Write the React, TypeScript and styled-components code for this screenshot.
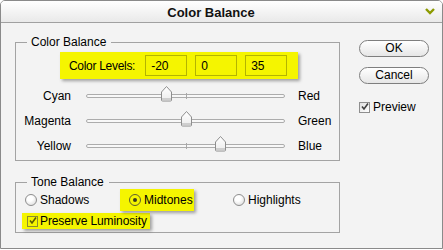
import React from "react";
import styled, { createGlobalStyle, css } from "styled-components";

const sliders = [
  { left: "Cyan", right: "Red", value: -20 },
  { left: "Magenta", right: "Green", value: 0 },
  { left: "Yellow", right: "Blue", value: 35 },
];

const levels = ["-20", "0", "35"];

const Check: React.FC<{ color: string }> = ({ color }) => (
  <svg width="8" height="8" viewBox="0 0 8 8">
    <polyline
      points="1,3.5 3,6 7,0.5"
      fill="none"
      stroke={color}
      strokeWidth="1.6"
    />
  </svg>
);

const SliderThumb: React.FC = () => (
  <svg width="13" height="17" viewBox="0 0 13 17">
    <defs>
      <linearGradient id="thumbFill" x1="0" y1="0" x2="0" y2="1">
        <stop offset="0" stopColor="#ffffff" />
        <stop offset="1" stopColor="#ececec" />
      </linearGradient>
    </defs>
    <path
      d="M1.5 7 L6.5 1.5 L11.5 7 V15 Q11.5 16 10.5 16 H2.5 Q1.5 16 1.5 15 Z"
      fill="url(#thumbFill)"
      stroke="#8e8e8e"
    />
    <rect x="2" y="13" width="9" height="2.5" fill="#cfcfcf" />
  </svg>
);

const App: React.FC = () => {
  return (
    <>
      <GlobalStyle />
      <Window>
        <TitleBar>
          <Title>Color Balance</Title>
          <Chevron width="10" height="7" viewBox="0 0 10 7">
            <polyline
              points="1,1 5,5 9,1"
              fill="none"
              stroke="#8c9a00"
              strokeWidth="2.4"
            />
          </Chevron>
        </TitleBar>

        <Body>
          <LeftColumn>
            <Group>
              <GroupLabel>Color Balance</GroupLabel>
              <LevelsBox>
                <LevelsLabel>Color Levels:</LevelsLabel>
                {levels.map((v, i) => (
                  <LevelInput key={i} value={v} readOnly />
                ))}
              </LevelsBox>
              <Sliders>
                {sliders.map((s) => (
                  <SliderRow key={s.left}>
                    <SliderLabel>{s.left}</SliderLabel>
                    <Track>
                      <Thumb style={{ left: `${(s.value + 100) / 2}%` }}>
                        <SliderThumb />
                      </Thumb>
                    </Track>
                    <SliderLabel $right>{s.right}</SliderLabel>
                  </SliderRow>
                ))}
              </Sliders>
            </Group>

            <Group>
              <GroupLabel>Tone Balance</GroupLabel>
              <ToneRow>
                <RadioOption>
                  <Radio />
                  Shadows
                </RadioOption>
                <RadioOption $highlight>
                  <Radio $checked />
                  Midtones
                </RadioOption>
                <RadioOption>
                  <Radio />
                  Highlights
                </RadioOption>
              </ToneRow>
              <PreserveBox>
                <CheckBox $highlight>
                  <Check color="#5c5c00" />
                </CheckBox>
                Preserve Luminosity
              </PreserveBox>
            </Group>
          </LeftColumn>

          <RightColumn>
            <PillButton>OK</PillButton>
            <PillButton>Cancel</PillButton>
            <PreviewRow>
              <CheckBox>
                <Check color="#404040" />
              </CheckBox>
              Preview
            </PreviewRow>
          </RightColumn>
        </Body>
      </Window>
    </>
  );
};

const GlobalStyle = createGlobalStyle`
  html, body {
    margin: 0;
    padding: 0;
    background: #ffffff;
  }

  body {
    font-family: "Liberation Sans", Arial, sans-serif;
    font-size: 12px;
    color: #000000;
  }
`;

const highlight = css`
  background-color: #f5f500;
  box-shadow: 2px 2px 3px rgba(0, 0, 0, 0.35);
`;

const Window = styled.div`
  width: 443px;
  height: 249px;
  box-sizing: border-box;
  border: 1px solid #8a8a8a;
  border-radius: 5px 5px 0 0;
  background-color: #f3f3f3;
  overflow: hidden;
  display: flex;
  flex-direction: column;
`;

const TitleBar = styled.div`
  height: 21px;
  flex: 0 0 21px;
  border-bottom: 1px solid #a0a0a0;
  background: linear-gradient(#ffffff, #e9e9e9);
  display: flex;
  align-items: center;
`;

const Title = styled.div`
  flex: 1;
  text-align: center;
  font-size: 13px;
  font-weight: bold;
  color: #111111;
  padding-top: 1px;
`;

const Chevron = styled.svg`
  margin: 0 7px 0 4px;
  flex: 0 0 10px;
`;

const Body = styled.div`
  display: flex;
  gap: 19px;
  padding: 12px 0 0 14px;
`;

const LeftColumn = styled.div`
  width: 325px;
  display: flex;
  flex-direction: column;
  gap: 14px;
`;

const Group = styled.fieldset`
  margin: 0;
  padding: 0 0 3px 0;
  min-width: 0;
  border: 1px solid #a3a3a3;
  box-sizing: border-box;
`;

const GroupLabel = styled.legend`
  margin-left: 11px;
  padding: 0 5px 0 4px;
  line-height: 14px;
  font-size: 12px;
`;

const LevelsBox = styled.div`
  ${highlight};
  margin: 3px 0 0 44px;
  width: 238px;
  height: 27px;
  box-sizing: border-box;
  padding-left: 9px;
  display: flex;
  align-items: center;
  gap: 8px;
`;

const LevelsLabel = styled.span`
  letter-spacing: -0.3px;
  margin-right: 2px;
  white-space: nowrap;
`;

const LevelInput = styled.input`
  width: 42px;
  height: 21px;
  box-sizing: border-box;
  border: 1px solid #b4b400;
  background: transparent;
  padding: 0 0 0 5px;
  font-family: "Liberation Sans", Arial, sans-serif;
  font-size: 12px;
  color: #000000;
  outline: none;
`;

const Sliders = styled.div`
  margin-top: 3px;
`;

const SliderRow = styled.div`
  display: grid;
  grid-template-columns: 70px 199px 1fr;
  align-items: center;
  height: 25px;
`;

const SliderLabel = styled.span<{ $right?: boolean }>`
  text-align: ${(p) => (p.$right ? "left" : "right")};
  padding: ${(p) => (p.$right ? "0 0 0 13px" : "0 15px 0 0")};
  padding-top: 3px;
`;

const Track = styled.div`
  position: relative;
  height: 4px;
  margin-top: 3px;
  box-sizing: border-box;
  border: 1px solid #acacac;
  border-radius: 3px;
  background-color: #f8f8f8;

  &::after {
    content: "";
    position: absolute;
    left: 50%;
    top: -2px;
    width: 1px;
    height: 6px;
    background-color: #a8a8a8;
  }
`;

const Thumb = styled.div`
  position: absolute;
  top: -10px;
  width: 13px;
  height: 17px;
  margin-left: -6px;
  z-index: 1;

  svg {
    display: block;
  }
`;

const ToneRow = styled.div`
  display: grid;
  grid-template-columns: 95px 113px auto;
  align-items: center;
  height: 22px;
  padding-left: 9px;
`;

const RadioOption = styled.div<{ $highlight?: boolean }>`
  display: flex;
  align-items: center;
  gap: 3px;
  height: 22px;
  box-sizing: border-box;
  white-space: nowrap;
  ${(p) =>
    p.$highlight &&
    css`
      ${highlight};
      width: 74px;
      padding-left: 9px;
    `}
`;

const Radio = styled.span<{ $checked?: boolean }>`
  flex: 0 0 12px;
  width: 12px;
  height: 12px;
  box-sizing: border-box;
  border-radius: 50%;
  border: 1px solid ${(p) => (p.$checked ? "#5e5e30" : "#8e8e8e")};
  background: ${(p) =>
    p.$checked
      ? "transparent"
      : "radial-gradient(circle at 40% 35%, #ffffff 30%, #d4d4d4)"};
  display: flex;
  align-items: center;
  justify-content: center;

  &::after {
    content: "";
    display: ${(p) => (p.$checked ? "block" : "none")};
    width: 4px;
    height: 4px;
    border-radius: 50%;
    background-color: #3a3a20;
  }
`;

const PreserveBox = styled.div`
  ${highlight};
  margin: 2px 0 0 6px;
  width: 128px;
  height: 16px;
  box-sizing: border-box;
  padding-left: 5px;
  display: flex;
  align-items: center;
  gap: 2px;
  white-space: nowrap;
  letter-spacing: -0.1px;
`;

const CheckBox = styled.span<{ $highlight?: boolean }>`
  flex: 0 0 11px;
  width: 11px;
  height: 11px;
  box-sizing: border-box;
  border: 1px solid ${(p) => (p.$highlight ? "#8c8c30" : "#8e8e8e")};
  background: ${(p) =>
    p.$highlight ? "transparent" : "linear-gradient(135deg, #e0e0e0, #ffffff)"};
  display: flex;
  align-items: center;
  justify-content: center;
`;

const RightColumn = styled.div`
  width: 70px;
  padding-top: 5px;
  display: flex;
  flex-direction: column;
  gap: 10px;
`;

const PillButton = styled.button`
  width: 70px;
  height: 17px;
  padding: 0;
  border: 1px solid #7e7e7e;
  border-radius: 9px;
  background: linear-gradient(#ffffff, #e6e6e6);
  font-family: "Liberation Sans", Arial, sans-serif;
  font-size: 12px;
  line-height: 15px;
  color: #000000;
`;

const PreviewRow = styled.div`
  margin-top: 6px;
  display: flex;
  align-items: center;
  gap: 3px;
`;

export default App;
